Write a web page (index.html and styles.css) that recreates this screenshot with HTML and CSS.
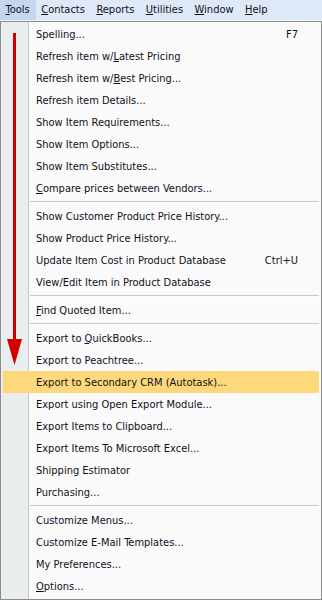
FILE: index.html
```
<!DOCTYPE html>
<html lang="en">
<head>
  <meta charset="UTF-8">
  <meta name="viewport" content="width=device-width, initial-scale=1.0">
  <title>Tools Menu</title>
  <link rel="stylesheet" href="styles.css">
</head>
<body>
  <!-- Menu bar -->
  <div class="menubar">
    <span class="top-item active"><u>T</u>ools</span>
    <span class="top-item"><u>C</u>ontacts</span>
    <span class="top-item"><u>R</u>eports</span>
    <span class="top-item"><u>U</u>tilities</span>
    <span class="top-item"><u>W</u>indow</span>
    <span class="top-item"><u>H</u>elp</span>
  </div>

  <!-- Tools dropdown -->
  <div class="menu">
    <svg class="arrow" width="24" height="334" viewBox="0 0 24 334">
      <rect x="13" y="0" width="3" height="308" fill="#d10000"/>
      <polygon points="7,306 22,306 14.5,332" fill="#d10000"/>
    </svg>

    <div class="item"><span>Spelling...</span><span class="key">F7</span></div>
    <div class="item"><span>Refresh item w/<u>L</u>atest Pricing</span></div>
    <div class="item"><span>Refresh item w/<u>B</u>est Pricing...</span></div>
    <div class="item"><span>Refresh item Details...</span></div>
    <div class="item"><span>Show Item Requirements...</span></div>
    <div class="item"><span>Show Item Options...</span></div>
    <div class="item"><span>Show Item Substitutes...</span></div>
    <div class="item"><span><u>C</u>ompare prices between Vendors...</span></div>
    <div class="sep"></div>
    <div class="item"><span>Show Customer Product Price History...</span></div>
    <div class="item"><span>Show Product Price History...</span></div>
    <div class="item"><span>Update Item Cost in Product Database</span><span class="key">Ctrl+U</span></div>
    <div class="item"><span>View/Edit Item in Product Database</span></div>
    <div class="sep"></div>
    <div class="item"><span><u>F</u>ind Quoted Item...</span></div>
    <div class="sep"></div>
    <div class="item"><span>Export to <u>Q</u>uickBooks...</span></div>
    <div class="item"><span>Export to Peachtree...</span></div>
    <div class="item hover"><span>Export to Secondary CRM (Autotask)...</span></div>
    <div class="item"><span>Export using Open Export Module...</span></div>
    <div class="item"><span>Export Items to Clipboard...</span></div>
    <div class="item"><span>Export Items To Microsoft Excel...</span></div>
    <div class="item"><span>Shipping Estimator</span></div>
    <div class="item"><span>Purchasing...</span></div>
    <div class="sep"></div>
    <div class="item"><span>Customize Menus...</span></div>
    <div class="item"><span>Customize E-Mail Templates...</span></div>
    <div class="item"><span>My Preferences...</span></div>
    <div class="item"><span><u>O</u>ptions...</span></div>
  </div>
</body>
</html>
```

FILE: styles.css
```
* {
  margin: 0;
  padding: 0;
  box-sizing: border-box;
}

body {
  width: 322px;
  height: 600px;
  font-family: 'DejaVu Sans Condensed', 'DejaVu Sans', sans-serif;
  font-size: 11px;
  color: #10101c;
  background: #fff;
  overflow: hidden;
}

u {
  text-decoration: underline;
  text-underline-offset: 1px;
}

.menubar {
  display: flex;
  height: 21px;
  background: #dfe8f6;
  border-bottom: 1px solid #eef2fa;
}

.top-item {
  padding: 0 6px 0 5.5px;
  line-height: 20px;
}

.top-item.active {
  background: #c6d6ef;
}

.menu {
  position: relative;
  height: 579px;
  border: 1px solid #8c8c8c;
  padding: 1px 0 2px;
  background: linear-gradient(to right, #e9eded 0 27px, #c8c8c8 27px 28px, #fff 28px 29px, #fafafa 29px);
}

.arrow {
  position: absolute;
  left: -1px;
  top: 11px;
}

.item {
  display: flex;
  justify-content: space-between;
  align-items: center;
  height: 22px;
  margin: 0 2px;
  padding: 0 21px 0 33px;
  white-space: nowrap;
}

.item.hover {
  background: #fdd97b;
}

.key {
  text-align: right;
}

.sep {
  height: 6px;
  margin: 0 2px 0 29px;
  padding-top: 2px;
}

.sep::after {
  content: '';
  display: block;
  border-top: 1px solid #c8c8c8;
  border-bottom: 1px solid #fff;
}
```
